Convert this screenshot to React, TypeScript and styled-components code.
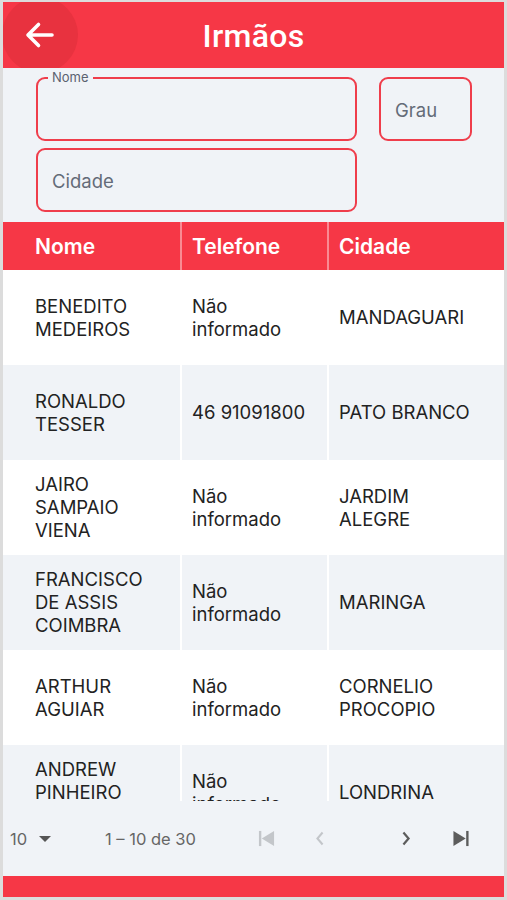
import React from "react";
import styled, { createGlobalStyle } from "styled-components";

const RED = "#f63746";
const GRAY_BG = "#f0f3f7";

const GlobalStyle = createGlobalStyle`
  html, body { margin: 0; padding: 0; background: #dcdcdc; }
  * { box-sizing: border-box; }
`;

const Frame = styled.div`
  width: 507px;
  height: 900px;
  padding: 2px 3px 3px 3px;
  background: #dcdcdc;
  display: flex;
  flex-direction: column;
  font-family: Inter, "Liberation Sans", sans-serif;
`;

const Screen = styled.div`
  flex: 1;
  display: flex;
  flex-direction: column;
  background: ${GRAY_BG};
  overflow: hidden;
`;

const Header = styled.header`
  position: relative;
  height: 66px;
  flex: none;
  background: ${RED};
  display: flex;
  align-items: center;
  justify-content: center;
  overflow: hidden;
`;

const BackButton = styled.button`
  position: absolute;
  left: -1px;
  top: -5px;
  width: 76px;
  height: 76px;
  border-radius: 50%;
  border: none;
  background: #e8323f;
  display: flex;
  align-items: center;
  justify-content: center;
  padding: 0;
  cursor: pointer;
`;

const Title = styled.h1`
  margin: 0;
  color: #fff;
  font-family: Roboto, "Liberation Sans", sans-serif;
  font-weight: 500;
  font-size: 32px;
  letter-spacing: 0.3px;
  padding-top: 1px;
`;

const Filters = styled.div`
  display: grid;
  grid-template-columns: 321px 93px;
  grid-template-rows: 64px 64px;
  column-gap: 22px;
  row-gap: 7px;
  padding: 9px 0 10px 33px;
`;

const Field = styled.div`
  position: relative;
  border: 2px solid #ef3d4b;
  border-radius: 9px;
  display: flex;
  align-items: center;
  padding-left: 14px;
  padding-top: 2px;
  font-size: 18.5px;
  color: #646b78;
  background: ${GRAY_BG};
`;

const FloatLabel = styled.span`
  position: absolute;
  top: -9px;
  left: 10px;
  padding: 0 4px;
  background: ${GRAY_BG};
  font-size: 13px;
  line-height: 14px;
  color: #5b6270;
`;

const TableWrap = styled.div`
  height: 579px;
  flex: none;
  overflow: hidden;
  display: flex;
  flex-direction: column;
`;

const Row = styled.div<{ $head?: boolean; $alt?: boolean; $h?: number }>`
  display: grid;
  grid-template-columns: 177px 147px 1fr;
  flex: none;
  height: ${(p) => p.$h ?? 95}px;
  background: ${(p) => (p.$head ? RED : p.$alt ? GRAY_BG : "#fff")};
`;

const Cell = styled.div<{ $head?: boolean; $first?: boolean }>`
  display: flex;
  align-items: center;
  padding-left: ${(p) => (p.$first ? 32 : 10)}px;
  padding-right: 8px;
  border-left: ${(p) => (p.$first ? "none" : p.$head ? "2px solid #f98a93" : "2px solid #ffffff")};
  color: ${(p) => (p.$head ? "#fff" : "#222")};
  font-weight: ${(p) => (p.$head ? 600 : 400)};
  font-size: ${(p) => (p.$head ? 21 : 18.5)}px;
  line-height: 23px;
`;

const CellText = styled.div<{ $max: number }>`
  max-width: ${(p) => p.$max}px;
`;

const LineSpacer = styled.div`
  height: 23px;
`;

const Paginator = styled.div`
  height: 75px;
  flex: none;
  display: flex;
  align-items: center;
  color: #666;
  font-size: 16.5px;
  padding-left: 7px;
`;

const PageSize = styled.div`
  display: flex;
  align-items: center;
  gap: 12px;
  width: 95px;
`;

const Range = styled.div`
  width: 150px;
`;

const IconBtn = styled.div<{ $w: number }>`
  width: ${(p) => p.$w}px;
  display: flex;
  justify-content: center;
`;

const BottomBar = styled.div`
  height: 21px;
  flex: none;
  background: ${RED};
`;

const rows: [string[], string, string, boolean?][] = [
  [["BENEDITO", "MEDEIROS"], "Não informado", "MANDAGUARI"],
  [["RONALDO", "TESSER"], "46 91091800", "PATO BRANCO"],
  [["JAIRO", "SAMPAIO", "VIENA"], "Não informado", "JARDIM ALEGRE"],
  [["FRANCISCO", "DE ASSIS", "COIMBRA"], "Não informado", "MARINGA"],
  [["ARTHUR", "AGUIAR"], "Não informado", "CORNELIO PROCOPIO"],
  [["ANDREW", "PINHEIRO"], "Não informado", "LONDRINA", true],
];

export default function App() {
  return (
    <>
      <GlobalStyle />
      <Frame>
        <Screen>
          <Header>
            <BackButton aria-label="Voltar">
              <svg width="36" height="36" viewBox="0 0 24 24" fill="none">
                <path d="M20 12H5M11 5l-7 7 7 7" stroke="#fff" strokeWidth="2.4" strokeLinecap="round" strokeLinejoin="round" />
              </svg>
            </BackButton>
            <Title>Irmãos</Title>
          </Header>
          <Filters>
            <Field>
              <FloatLabel>Nome</FloatLabel>
            </Field>
            <Field>Grau</Field>
            <Field>Cidade</Field>
          </Filters>
          <TableWrap>
            <Row $head $h={48}>
              <Cell $head $first>Nome</Cell>
              <Cell $head>Telefone</Cell>
              <Cell $head>Cidade</Cell>
            </Row>
            {rows.map((r, i) => (
              <Row key={i} $alt={i % 2 === 1}>
                <Cell $first>
                  <CellText $max={130}>
                    {r[0].map((l, j) => (
                      <div key={j}>{l}</div>
                    ))}
                    {r[3] && <LineSpacer />}
                  </CellText>
                </Cell>
                <Cell>
                  <CellText $max={120}>{r[1]}</CellText>
                </Cell>
                <Cell>
                  <CellText $max={138}>{r[2]}</CellText>
                </Cell>
              </Row>
            ))}
          </TableWrap>
          <Paginator>
            <PageSize>
              <span>10</span>
              <svg width="12" height="8" viewBox="0 0 12 8">
                <path d="M0 1h12L6 7z" fill="#555" />
              </svg>
            </PageSize>
            <Range>1 – 10 de 30</Range>
            <IconBtn $w={22}>
              <svg width="17" height="17" viewBox="0 0 18 18">
                <rect x="1" y="1" width="2.5" height="16" fill="#c3c6ca" />
                <path d="M17 1v16L4 9z" fill="#c3c6ca" />
              </svg>
            </IconBtn>
            <IconBtn $w={86}>
              <svg width="12" height="17" viewBox="0 0 14 18">
                <path d="M10 2L4 9l6 7" stroke="#c3c6ca" strokeWidth="2.4" fill="none" />
              </svg>
            </IconBtn>
            <IconBtn $w={86}>
              <svg width="12" height="17" viewBox="0 0 14 18">
                <path d="M4 2l6 7-6 7" stroke="#5c5c5c" strokeWidth="2.6" fill="none" />
              </svg>
            </IconBtn>
            <IconBtn $w={23}>
              <svg width="18" height="17" viewBox="0 0 18 18">
                <path d="M1 1v16L14 9z" fill="#5c5c5c" />
                <rect x="14.5" y="1" width="2.5" height="16" fill="#5c5c5c" />
              </svg>
            </IconBtn>
          </Paginator>
          <BottomBar />
        </Screen>
      </Frame>
    </>
  );
}
